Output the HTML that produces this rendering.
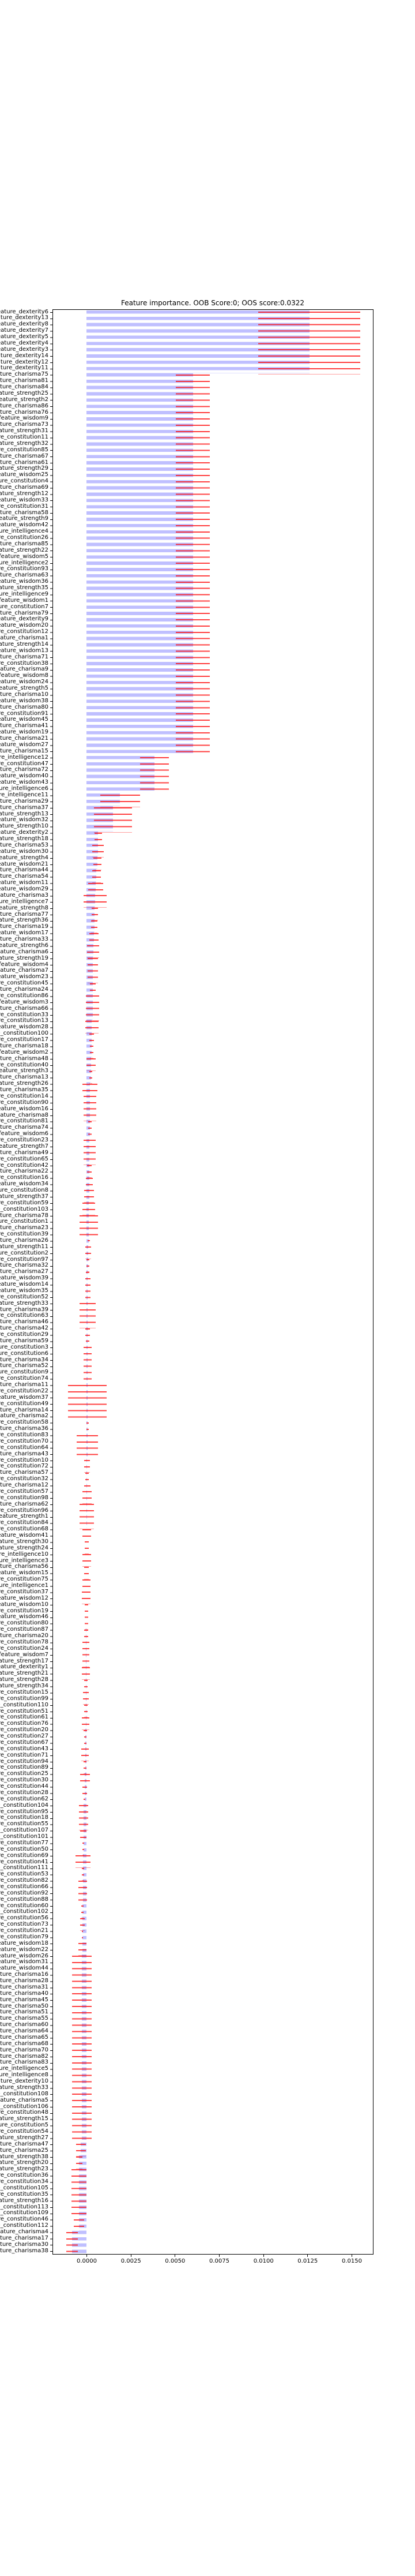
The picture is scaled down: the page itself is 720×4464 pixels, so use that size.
<!DOCTYPE html>
<html><head><meta charset="utf-8">
<style>
html,body{margin:0;padding:0;background:#fff;}
body{width:720px;height:4464px;position:relative;overflow:hidden;font-family:"DejaVu Sans","Liberation Sans",sans-serif;}
.ax{position:absolute;left:90.5px;top:536px;width:557.5px;height:3371px;border:1px solid #000;box-sizing:border-box;}
.b,.e{position:absolute;}
.b{background:repeating-linear-gradient(to bottom,rgba(0,0,255,0.25) 0 5.7px,transparent 5.7px 10.874px);}
.e{background:repeating-linear-gradient(to bottom,rgba(255,0,0,0.75) 0 2px,transparent 2px 10.874px);}
.yt{position:absolute;left:87px;top:540.5px;width:3.5px;height:3371px;background:repeating-linear-gradient(to bottom,#000 0 1px,transparent 1px 10.874px);}
.lab{position:absolute;left:-316px;width:400px;text-align:right;font-size:10px;line-height:10.874px;white-space:pre;color:#000;}
.xt{position:absolute;top:3907px;width:1px;height:3.5px;background:#000;}
.xl{position:absolute;top:3913px;width:60px;margin-left:-30px;text-align:center;font-size:10px;color:#000;}
.title{position:absolute;top:518px;left:90px;width:558px;text-align:center;font-size:12px;color:#000;}
</style></head><body>
<div class="title">Feature importance. OOB Score:0; OOS score:0.0322</div>
<div class="ax"></div>
<div class="yt"></div>

<div class="b" style="left:150px;width:387px;top:538.15px;height:108.74px"></div>
<div class="e" style="left:448px;width:177px;top:540px;height:108.74px"></div>
<div class="b" style="left:150px;width:185px;top:646.89px;height:663.3px"></div>
<div class="e" style="left:305px;width:59px;top:648.74px;height:663.3px"></div>
<div class="b" style="left:150px;width:118px;top:1310.2px;height:65.24px"></div>
<div class="e" style="left:243px;width:50px;top:1312.2px;height:65.24px"></div>
<div class="b" style="left:150px;width:58px;top:1375.4px;height:21.75px"></div>
<div class="e" style="left:174px;width:69px;top:1377.3px;height:21.75px"></div>
<div class="b" style="left:150px;width:46px;top:1397.2px;height:43.5px"></div>
<div class="e" style="left:163px;width:66px;top:1399px;height:43.5px"></div>

<div class="b" style="left:150px;width:20px;top:1440.7px;height:21.75px"></div>
<div class="e" style="left:164px;width:13px;top:1442.5px;height:21.75px"></div>
<div class="b" style="left:150px;width:20px;top:1462.4px;height:21.75px"></div>
<div class="e" style="left:160px;width:20px;top:1464.3px;height:21.75px"></div>
<div class="b" style="left:150px;width:19px;top:1484.2px;height:21.75px"></div>
<div class="e" style="left:162px;width:14px;top:1486px;height:21.75px"></div>
<div class="b" style="left:150px;width:17px;top:1505.9px;height:21.75px"></div>
<div class="e" style="left:160px;width:15px;top:1507.8px;height:21.75px"></div>
<div class="b" style="left:150px;width:16px;top:1527.7px;height:21.75px"></div>
<div class="e" style="left:153px;width:26px;top:1529.5px;height:21.75px"></div>
<div class="b" style="left:150px;width:15px;top:1549.4px;height:21.75px"></div>
<div class="e" style="left:145px;width:40px;top:1551.3px;height:21.75px"></div>
<div class="b" style="left:150px;width:14px;top:1571.2px;height:21.75px"></div>
<div class="e" style="left:159px;width:11px;top:1573px;height:21.75px"></div>
<div class="b" style="left:150px;width:14px;top:1592.9px;height:21.75px"></div>
<div class="e" style="left:158px;width:11px;top:1594.8px;height:21.75px"></div>
<div class="b" style="left:150px;width:13px;top:1614.7px;height:21.75px"></div>
<div class="e" style="left:155px;width:16px;top:1616.5px;height:21.75px"></div>
<div class="b" style="left:150px;width:12px;top:1636.4px;height:21.75px"></div>
<div class="e" style="left:151px;width:21px;top:1638.3px;height:21.75px"></div>
<div class="b" style="left:150px;width:11px;top:1658.2px;height:43.5px"></div>
<div class="e" style="left:152px;width:18px;top:1660px;height:43.5px"></div>
<div class="b" style="left:150px;width:11px;top:1701.7px;height:21.75px"></div>
<div class="e" style="left:156px;width:10px;top:1703.5px;height:21.75px"></div>
<div class="b" style="left:150px;width:11px;top:1723.4px;height:43.5px"></div>
<div class="e" style="left:149px;width:23px;top:1725.3px;height:43.5px"></div>
<div class="b" style="left:150px;width:9px;top:1766.9px;height:21.75px"></div>
<div class="e" style="left:148px;width:23px;top:1768.8px;height:21.75px"></div>
<div class="b" style="left:150px;width:9px;top:1788.7px;height:21.75px"></div>
<div class="e" style="left:155px;width:8px;top:1790.5px;height:21.75px"></div>
<div class="b" style="left:150px;width:9px;top:1810.4px;height:21.75px"></div>
<div class="e" style="left:156px;width:6px;top:1812.3px;height:21.75px"></div>
<div class="b" style="left:150px;width:8px;top:1832.2px;height:21.75px"></div>
<div class="e" style="left:150px;width:16px;top:1834px;height:21.75px"></div>
<div class="b" style="left:150px;width:8px;top:1853.9px;height:21.75px"></div>
<div class="e" style="left:155px;width:5px;top:1855.8px;height:21.75px"></div>
<div class="b" style="left:150px;width:6px;top:1875.7px;height:21.75px"></div>
<div class="e" style="left:143px;width:26px;top:1877.5px;height:21.75px"></div>

<div class="b" style="left:150px;width:6px;top:1897.4px;height:43.5px"></div>
<div class="e" style="left:145px;width:22px;top:1899.3px;height:43.5px"></div>
<div class="b" style="left:150px;width:6px;top:1940.9px;height:32.6px"></div>
<div class="e" style="left:153px;width:6px;top:1942.8px;height:32.6px"></div>
<div class="b" style="left:150px;width:5px;top:1973.5px;height:43.5px"></div>
<div class="e" style="left:145px;width:21px;top:1975.4px;height:43.5px"></div>
<div class="b" style="left:150px;width:5px;top:2017px;height:21.75px"></div>
<div class="e" style="left:151px;width:8px;top:2018.9px;height:21.75px"></div>
<div class="b" style="left:150px;width:5px;top:2038.8px;height:21.75px"></div>
<div class="e" style="left:149px;width:12px;top:2040.6px;height:21.75px"></div>
<div class="b" style="left:150px;width:5px;top:2060.5px;height:21.75px"></div>
<div class="e" style="left:146px;width:17px;top:2062.4px;height:21.75px"></div>
<div class="b" style="left:150px;width:4px;top:2082.3px;height:21.75px"></div>
<div class="e" style="left:143px;width:22px;top:2084.1px;height:21.75px"></div>
<div class="b" style="left:150px;width:4px;top:2104px;height:43.5px"></div>
<div class="e" style="left:138px;width:32px;top:2105.9px;height:43.5px"></div>
<div class="b" style="left:150px;width:4px;top:2147.5px;height:10.87px"></div>
<div class="e" style="left:152px;width:4px;top:2149.4px;height:10.87px"></div>
<div class="b" style="left:150px;width:3px;top:2158.4px;height:21.75px"></div>
<div class="e" style="left:148px;width:10px;top:2160.3px;height:21.75px"></div>
<div class="b" style="left:150px;width:3px;top:2180.2px;height:21.75px"></div>
<div class="e" style="left:150px;width:5px;top:2182px;height:21.75px"></div>
<div class="b" style="left:150px;width:2px;top:2201.9px;height:10.87px"></div>
<div class="e" style="left:149px;width:6px;top:2203.8px;height:10.87px"></div>
<div class="b" style="left:150px;width:2px;top:2212.8px;height:43.5px"></div>
<div class="e" style="left:148px;width:9px;top:2214.7px;height:43.5px"></div>
<div class="b" style="left:150px;width:2px;top:2256.3px;height:43.5px"></div>
<div class="e" style="left:138px;width:28px;top:2258.2px;height:43.5px"></div>
<div class="b" style="left:150px;width:2px;top:2299.8px;height:21.75px"></div>
<div class="e" style="left:148px;width:8px;top:2301.6px;height:21.75px"></div>
<div class="b" style="left:150px;width:2px;top:2321.5px;height:10.87px"></div>
<div class="e" style="left:149px;width:6px;top:2323.4px;height:10.87px"></div>
<div class="b" style="left:150px;width:2px;top:2332.4px;height:65.24px"></div>
<div class="e" style="left:145px;width:14px;top:2334.2px;height:65.24px"></div>
<div class="b" style="left:150px;width:2px;top:2397.6px;height:65.24px"></div>
<div class="e" style="left:118px;width:67px;top:2399.5px;height:65.24px"></div>
<div class="b" style="left:150px;width:2px;top:2462.9px;height:21.75px"></div>
<div class="e" style="left:150px;width:4px;top:2464.7px;height:21.75px"></div>
<div class="b" style="left:150px;width:2px;top:2484.6px;height:43.5px"></div>
<div class="e" style="left:133px;width:37px;top:2486.5px;height:43.5px"></div>
<div class="b" style="left:150px;width:1px;top:2528.1px;height:21.75px"></div>
<div class="e" style="left:146px;width:10px;top:2530px;height:21.75px"></div>
<div class="b" style="left:150px;width:1px;top:2549.9px;height:21.75px"></div>
<div class="e" style="left:148px;width:6px;top:2551.7px;height:21.75px"></div>
<div class="b" style="left:150px;width:1px;top:2571.6px;height:10.87px"></div>
<div class="e" style="left:146px;width:11px;top:2573.5px;height:10.87px"></div>
<div class="b" style="left:150px;width:1px;top:2582.5px;height:21.75px"></div>
<div class="e" style="left:143px;width:16px;top:2584.3px;height:21.75px"></div>
<div class="b" style="left:150px;width:1px;top:2604.2px;height:43.5px"></div>
<div class="e" style="left:138px;width:25px;top:2606.1px;height:43.5px"></div>
<div class="e" style="left:143px;width:15px;top:2649.6px;height:21.75px"></div>
<div class="e" style="left:147px;width:7px;top:2671.3px;height:21.75px"></div>
<div class="e" style="left:143px;width:15px;top:2693.1px;height:21.75px"></div>
<div class="e" style="left:146px;width:8px;top:2714.8px;height:21.75px"></div>
<div class="e" style="left:143px;width:14px;top:2736.6px;height:21.75px"></div>
<div class="e" style="left:142px;width:15px;top:2758.3px;height:21.75px"></div>
<div class="e" style="left:147px;width:6px;top:2780.1px;height:43.5px"></div>
<div class="b" style="left:149px;width:1px;top:2821.7px;height:21.75px"></div>
<div class="e" style="left:146px;width:7px;top:2823.6px;height:21.75px"></div>
<div class="b" style="left:149px;width:1px;top:2843.5px;height:43.5px"></div>
<div class="e" style="left:143px;width:12px;top:2845.3px;height:43.5px"></div>
<div class="b" style="left:149px;width:1px;top:2887px;height:21.75px"></div>
<div class="e" style="left:142px;width:14px;top:2888.8px;height:21.75px"></div>
<div class="b" style="left:149px;width:1px;top:2908.7px;height:21.75px"></div>
<div class="e" style="left:146px;width:6px;top:2910.6px;height:21.75px"></div>
<div class="b" style="left:149px;width:1px;top:2930.5px;height:21.75px"></div>
<div class="e" style="left:144px;width:10px;top:2932.3px;height:21.75px"></div>
<div class="b" style="left:149px;width:1px;top:2952.2px;height:21.75px"></div>
<div class="e" style="left:146px;width:6px;top:2954.1px;height:21.75px"></div>
<div class="b" style="left:149px;width:1px;top:2974px;height:21.75px"></div>
<div class="e" style="left:142px;width:13px;top:2975.8px;height:21.75px"></div>
<div class="b" style="left:148px;width:2px;top:2995.7px;height:10.87px"></div>
<div class="e" style="left:145px;width:6px;top:2997.6px;height:10.87px"></div>
<div class="b" style="left:148px;width:2px;top:3006.6px;height:21.75px"></div>
<div class="e" style="left:146px;width:4px;top:3008.5px;height:21.75px"></div>
<div class="b" style="left:148px;width:2px;top:3028.4px;height:21.75px"></div>
<div class="e" style="left:141px;width:13px;top:3030.2px;height:21.75px"></div>
<div class="b" style="left:148px;width:2px;top:3050.1px;height:21.75px"></div>
<div class="e" style="left:145px;width:5px;top:3052px;height:21.75px"></div>
<div class="b" style="left:147px;width:3px;top:3071.9px;height:21.75px"></div>
<div class="e" style="left:139px;width:17px;top:3073.7px;height:21.75px"></div>
<div class="b" style="left:147px;width:3px;top:3093.6px;height:21.75px"></div>
<div class="e" style="left:143px;width:8px;top:3095.5px;height:21.75px"></div>
<div class="b" style="left:147px;width:3px;top:3115.4px;height:10.87px"></div>
<div class="e" style="left:145px;width:3px;top:3117.2px;height:10.87px"></div>
<div class="b" style="left:145px;width:5px;top:3126.2px;height:43.5px"></div>
<div class="e" style="left:137px;width:16px;top:3128.1px;height:43.5px"></div>
<div class="b" style="left:145px;width:5px;top:3169.7px;height:21.75px"></div>
<div class="e" style="left:139px;width:11px;top:3171.6px;height:21.75px"></div>
<div class="b" style="left:145px;width:5px;top:3191.5px;height:21.75px"></div>
<div class="e" style="left:143px;width:3px;top:3193.3px;height:21.75px"></div>
<div class="b" style="left:144px;width:6px;top:3213.2px;height:21.75px"></div>
<div class="e" style="left:131px;width:26px;top:3215.1px;height:21.75px"></div>
<div class="b" style="left:144px;width:6px;top:3235px;height:21.75px"></div>
<div class="e" style="left:142px;width:4px;top:3236.8px;height:21.75px"></div>
<div class="b" style="left:144px;width:6px;top:3256.7px;height:43.5px"></div>
<div class="e" style="left:136px;width:15px;top:3258.6px;height:43.5px"></div>
<div class="b" style="left:143px;width:7px;top:3300.2px;height:21.75px"></div>
<div class="e" style="left:141px;width:4px;top:3302.1px;height:21.75px"></div>
<div class="b" style="left:143px;width:7px;top:3322px;height:21.75px"></div>
<div class="e" style="left:139px;width:8px;top:3323.8px;height:21.75px"></div>
<div class="b" style="left:143px;width:7px;top:3343.7px;height:21.75px"></div>
<div class="e" style="left:142px;width:2px;top:3345.6px;height:21.75px"></div>
<div class="b" style="left:143px;width:7px;top:3365.5px;height:21.75px"></div>
<div class="e" style="left:136px;width:14px;top:3367.3px;height:21.75px"></div>
<div class="b" style="left:142px;width:8px;top:3387.2px;height:326.2px"></div>
<div class="e" style="left:125px;width:34px;top:3389.1px;height:326.2px"></div>
<div class="b" style="left:140px;width:10px;top:3713.4px;height:21.75px"></div>
<div class="e" style="left:132px;width:17px;top:3715.3px;height:21.75px"></div>
<div class="b" style="left:137px;width:13px;top:3735.2px;height:21.75px"></div>
<div class="e" style="left:132px;width:11px;top:3737px;height:21.75px"></div>
<div class="b" style="left:137px;width:13px;top:3756.9px;height:87px"></div>
<div class="e" style="left:124px;width:26px;top:3758.8px;height:87px"></div>
<div class="b" style="left:137px;width:13px;top:3843.9px;height:21.75px"></div>
<div class="e" style="left:128px;width:18px;top:3845.7px;height:21.75px"></div>
<div class="b" style="left:125px;width:25px;top:3865.6px;height:43.5px"></div>
<div class="e" style="left:115px;width:20px;top:3867.5px;height:43.5px"></div>

<div class="xt" style="left:150px"></div>
<div class="xt" style="left:226.7px"></div>
<div class="xt" style="left:303.3px"></div>
<div class="xt" style="left:380px"></div>
<div class="xt" style="left:456.7px"></div>
<div class="xt" style="left:533.3px"></div>
<div class="xt" style="left:610px"></div>
<div class="xl" style="left:150.5px">0.0000</div>
<div class="xl" style="left:227.2px">0.0025</div>
<div class="xl" style="left:303.8px">0.0050</div>
<div class="xl" style="left:380.5px">0.0075</div>
<div class="xl" style="left:457.2px">0.0100</div>
<div class="xl" style="left:533.8px">0.0125</div>
<div class="xl" style="left:610.5px">0.0150</div>

<div class="lab" style="top:535.6px">feature_dexterity6
feature_dexterity13
feature_dexterity8
feature_dexterity7
feature_dexterity5
feature_dexterity4
feature_dexterity3
feature_dexterity14
feature_dexterity12
feature_dexterity11
feature_charisma75
feature_charisma81
feature_charisma84
feature_strength25
feature_strength2
feature_charisma86
feature_charisma76
feature_wisdom9
feature_charisma73
feature_strength31
feature_constitution11
feature_strength32
feature_constitution85
feature_charisma67
feature_charisma61
feature_strength29
feature_wisdom25
feature_constitution4
feature_charisma69
feature_strength12
feature_wisdom33
feature_constitution31
feature_charisma58
feature_strength9
feature_wisdom42
feature_intelligence4
feature_constitution26
feature_charisma85
feature_strength22
feature_wisdom5
feature_intelligence2
feature_constitution93
feature_charisma63
feature_wisdom36
feature_strength35
feature_intelligence9
feature_wisdom1
feature_constitution7
feature_charisma79
feature_dexterity9</div>
<div class="lab" style="top:1079.3px">feature_wisdom20
feature_constitution12
feature_charisma1
feature_strength14
feature_wisdom13
feature_charisma71
feature_constitution38
feature_charisma9
feature_wisdom8
feature_wisdom24
feature_strength5
feature_charisma10
feature_wisdom38
feature_charisma80
feature_constitution91
feature_wisdom45
feature_charisma41
feature_wisdom19
feature_charisma21
feature_wisdom27
feature_charisma15
feature_intelligence12
feature_constitution47
feature_charisma72
feature_wisdom40
feature_wisdom43
feature_intelligence6
feature_intelligence11
feature_charisma29
feature_charisma37
feature_strength13
feature_wisdom32
feature_strength10
feature_dexterity2
feature_strength18
feature_charisma53
feature_wisdom30
feature_strength4
feature_wisdom21
feature_charisma44
feature_charisma54
feature_wisdom11
feature_wisdom29
feature_charisma3
feature_intelligence7
feature_strength8
feature_charisma77
feature_strength36
feature_charisma19
feature_wisdom17</div>
<div class="lab" style="top:1623px">feature_charisma33
feature_strength6
feature_charisma6
feature_strength19
feature_wisdom4
feature_charisma7
feature_wisdom23
feature_constitution45
feature_charisma24
feature_constitution86
feature_wisdom3
feature_charisma66
feature_constitution33
feature_constitution13
feature_wisdom28
feature_constitution100
feature_constitution17
feature_charisma18
feature_wisdom2
feature_charisma48
feature_constitution40
feature_strength3
feature_charisma13
feature_strength26
feature_charisma35
feature_constitution14
feature_constitution90
feature_wisdom16
feature_charisma8
feature_constitution81
feature_charisma74
feature_wisdom6
feature_constitution23
feature_strength7
feature_charisma49
feature_constitution65
feature_constitution42
feature_charisma22
feature_constitution16
feature_wisdom34
feature_constitution8
feature_strength37
feature_constitution59
feature_constitution103
feature_charisma78
feature_constitution1
feature_charisma23
feature_constitution39
feature_charisma26
feature_strength11</div>
<div class="lab" style="top:2166.7px">feature_constitution2
feature_constitution97
feature_charisma32
feature_charisma27
feature_wisdom39
feature_wisdom14
feature_wisdom35
feature_constitution52
feature_strength33
feature_charisma39
feature_constitution63
feature_charisma46
feature_charisma42
feature_constitution29
feature_charisma59
feature_constitution3
feature_constitution6
feature_charisma34
feature_charisma52
feature_constitution9
feature_constitution74
feature_charisma11
feature_constitution22
feature_wisdom37
feature_constitution49
feature_charisma14
feature_charisma2
feature_constitution58
feature_charisma36
feature_constitution83
feature_constitution70
feature_constitution64
feature_charisma43
feature_constitution10
feature_constitution72
feature_charisma57
feature_constitution32
feature_charisma12
feature_constitution57
feature_constitution98
feature_charisma62
feature_constitution96
feature_strength1
feature_constitution84
feature_constitution68
feature_wisdom41
feature_strength30
feature_strength24
feature_intelligence10
feature_intelligence3</div>
<div class="lab" style="top:2710.4px">feature_charisma56
feature_wisdom15
feature_constitution75
feature_intelligence1
feature_constitution37
feature_wisdom12
feature_wisdom10
feature_constitution19
feature_wisdom46
feature_constitution80
feature_constitution87
feature_charisma20
feature_constitution78
feature_constitution24
feature_wisdom7
feature_strength17
feature_dexterity1
feature_strength21
feature_strength28
feature_strength34
feature_constitution15
feature_constitution99
feature_constitution110
feature_constitution51
feature_constitution61
feature_constitution76
feature_constitution20
feature_constitution27
feature_constitution67
feature_constitution43
feature_constitution71
feature_constitution94
feature_constitution89
feature_constitution25
feature_constitution30
feature_constitution44
feature_constitution28
feature_constitution62
feature_constitution104
feature_constitution95
feature_constitution18
feature_constitution55
feature_constitution107
feature_constitution101
feature_constitution77
feature_constitution50
feature_constitution69
feature_constitution41
feature_constitution111
feature_constitution53</div>
<div class="lab" style="top:3254.1px">feature_constitution82
feature_constitution66
feature_constitution92
feature_constitution88
feature_constitution60
feature_constitution102
feature_constitution56
feature_constitution73
feature_constitution21
feature_constitution79
feature_wisdom18
feature_wisdom22
feature_wisdom26
feature_wisdom31
feature_wisdom44
feature_charisma16
feature_charisma28
feature_charisma31
feature_charisma40
feature_charisma45
feature_charisma50
feature_charisma51
feature_charisma55
feature_charisma60
feature_charisma64
feature_charisma65
feature_charisma68
feature_charisma70
feature_charisma82
feature_charisma83
feature_intelligence5
feature_intelligence8
feature_dexterity10
feature_strength33
feature_constitution108
feature_charisma5
feature_constitution106
feature_constitution48
feature_strength15
feature_constitution5
feature_constitution54
feature_strength27
feature_charisma47
feature_charisma25
feature_strength38
feature_strength20
feature_strength23
feature_constitution36
feature_constitution34
feature_constitution105
feature_constitution35
feature_strength16
feature_constitution113
feature_constitution109
feature_constitution46
feature_constitution112
feature_charisma4
feature_charisma17
feature_charisma30
feature_charisma38</div>
</body></html>
